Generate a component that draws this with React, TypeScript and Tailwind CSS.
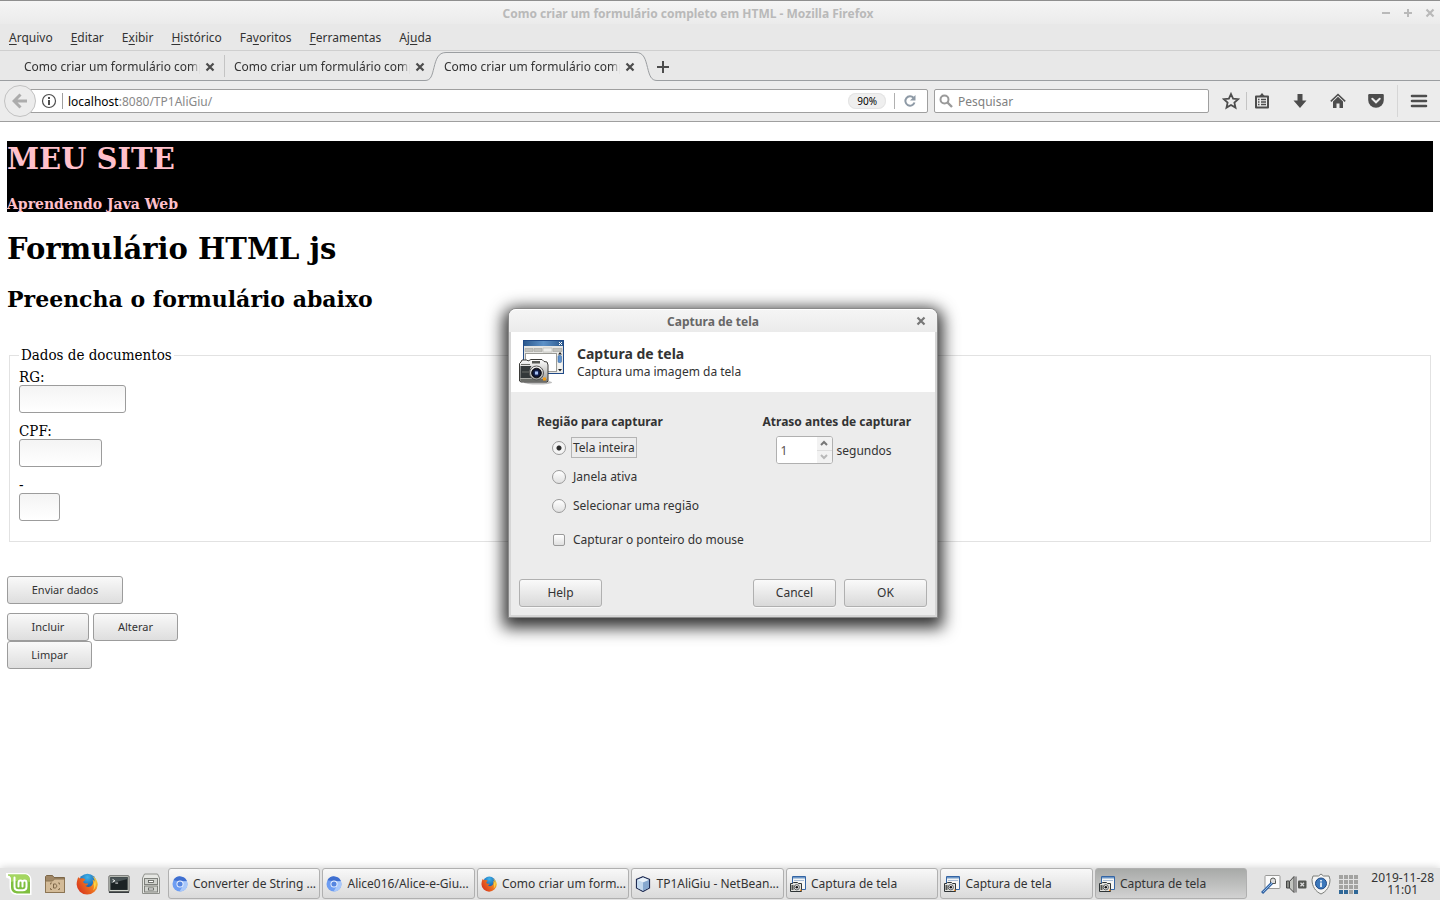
import type { ReactNode } from "react";

type IconProps = { className?: string };

function CaptureIcon({ className = "" }: IconProps) {
  return (
    <svg viewBox="0 0 48 48" className={className} aria-hidden="true">
      <defs>
        <linearGradient id="capTitle" x1="0" y1="0" x2="1" y2="0">
          <stop offset="0" stopColor="#2d5a8e" />
          <stop offset="0.5" stopColor="#5d92c8" />
          <stop offset="1" stopColor="#2d5a8e" />
        </linearGradient>
        <linearGradient id="capBody" x1="0" y1="0" x2="0" y2="1">
          <stop offset="0" stopColor="#ffffff" />
          <stop offset="1" stopColor="#9a9a96" />
        </linearGradient>
        <radialGradient id="capLens">
          <stop offset="0" stopColor="#7c9fe0" />
          <stop offset="0.35" stopColor="#1a2b66" />
          <stop offset="1" stopColor="#06070f" />
        </radialGradient>
      </defs>
      <ellipse cx="20" cy="44.500" rx="14" ry="2" fill="#000" opacity="0.25" />
      <rect x="5.500" y="2.500" width="40" height="33" fill="#e6e6e3" stroke="#204a87" />
      <rect x="6" y="3" width="39" height="5" fill="url(#capTitle)" />
      <path d="M41 4l3 3M44 4l-3 3" stroke="#fff" strokeWidth="1" />
      <path d="M7 10.500h8v3h-8zM16 10.500h8v3h-8zM35 10.500h9v3h-9z" fill="#c2c2bd" stroke="#a5a59f" strokeWidth="0.600" />
      <path d="M25 14V10h9v4z" fill="#eeeeec" stroke="#b5b5b0" strokeWidth="0.600" />
      <rect x="7.500" y="15.500" width="31" height="18" fill="#fff" stroke="#9b9b96" />
      <rect x="39.500" y="14.500" width="4.500" height="20" fill="#f3f3f0" />
      <rect x="40" y="17.500" width="3.500" height="7" rx="1" fill="#5d92d0" stroke="#2d5a8e" strokeWidth="0.500" />
      <path d="M40 16.500h4l-2-2.500zM40 31h4l-2 2.500z" fill="#222" />
      <path d="M3 24l1-2h5l1 1 3-1.500h11l2 2 3 .5 1 3v16l-1 1H3l-1.500-1V25.500z" fill="url(#capBody)" stroke="#3b3b38" />
      <path d="M2.500 28h11c-2.500 3-2.500 9 0 12h-11z" fill="#33383a" />
      <path d="M3 26.500h9M4 34h7" stroke="#6a6c68" strokeWidth="1" />
      <path d="M2.500 41h26v2.500h-26z" fill="#6c6e6a" />
      <rect x="14" y="23" width="8" height="2.500" fill="#555753" />
      <circle cx="18.500" cy="35" r="7" fill="url(#capBody)" stroke="#555" />
      <circle cx="18.500" cy="35" r="4.800" fill="url(#capLens)" stroke="#15151a" />
      <rect x="17" y="33.500" width="3" height="3" fill="#a9c2f2" />
      <rect x="25" y="39.500" width="3" height="3" fill="#f59b10" />
    </svg>
  );
}

function CaptureSmallIcon({ className = "" }: IconProps) {
  return (
    <svg viewBox="0 0 16 16" className={className} aria-hidden="true">
      <path d="M2.500 .5h13v13h-13z" fill="#f6f6f4" stroke="#3465a4" />
      <path d="M3 1h12v1.500H3z" fill="#6f98c8" />
      <path d="M4 4.500h10" stroke="#a9bdd6" />
      <path d="M.5 7.500h2l1-1h4l1 1h3v8H.5z" fill="#e2e2de" stroke="#2e3436" />
      <path d="M1.500 9h2v5h-2z" fill="#555753" />
      <circle cx="6.800" cy="11.300" r="2.600" fill="#fff" stroke="#2e3436" strokeWidth="0.800" />
      <circle cx="6.800" cy="11.300" r="1.300" fill="#111" />
      <path d="M10 13.500h1.500V15H10z" fill="#f0902c" />
    </svg>
  );
}

function ChromiumIcon({ className = "" }: IconProps) {
  return (
    <svg viewBox="0 0 16 16" className={className} aria-hidden="true">
      <circle cx="8" cy="8" r="7.500" fill="#6d9df2" />
      <path d="M1.400 4.300A7.500 7.500 0 0 1 15 5.200H8z" fill="#3f6fd0" />
      <path d="M15 5.200A7.500 7.500 0 0 1 7.500 15.500L11 9.800 10 5.200z" fill="#a9c8fa" />
      <circle cx="8" cy="8" r="3.500" fill="#f3f7ff" />
      <circle cx="8" cy="8" r="2.600" fill="#5585e0" />
    </svg>
  );
}

function FirefoxIcon({ className = "" }: IconProps) {
  return (
    <svg viewBox="0 0 24 24" className={className} aria-hidden="true">
      <defs>
        <radialGradient id="ffGlobe" cx="0.5" cy="0.2" r="0.8">
          <stop offset="0" stopColor="#3fb4ea" />
          <stop offset="0.6" stopColor="#1c6bb8" />
          <stop offset="1" stopColor="#123a7c" />
        </radialGradient>
        <linearGradient id="ffTail" x1="0" y1="0.8" x2="1" y2="0.2">
          <stop offset="0" stopColor="#d6301d" />
          <stop offset="0.6" stopColor="#ee7420" />
          <stop offset="1" stopColor="#fbd63c" />
        </linearGradient>
      </defs>
      <circle cx="12.500" cy="10.500" r="9.700" fill="url(#ffGlobe)" />
      <path
        d="M2.500 4.500c.8.300 1.400.9 1.800 1.700C6 5.500 8.500 5.800 10 6.800c-.6 1.200-1 2-2.300 2.500.2 1 .8 1.600 2 2.200 1.500.2 2.500-.3 3.600.2-.5 1.300-2 2.200-3.400 2.300 2.800 2.400 7 1 8.300-2 .8-2 .3-4-.5-5 1.500.6 2.300 1.600 2.600 2.600.1-2.500-1-4.600-2.500-6 3.400 1.500 6 5 6 9.200A11.600 11.600 0 0 1 12.200 23.500 11.400 11.400 0 0 1 .7 12.600C.7 9.500 1.500 6.700 2.500 4.500z"
        fill="url(#ffTail)"
      />
      <path d="M20.300 8c2.300 3.500 1.500 8.700-1.800 11.200 1.500-3 1.500-5.200.8-7.200.9-1.300 1.200-2.600 1-4z" fill="#fde04a" opacity="0.850" />
    </svg>
  );
}

function CubeIcon({ className = "" }: IconProps) {
  return (
    <svg viewBox="0 0 16 16" className={className} aria-hidden="true">
      <path d="M8 .7l6.500 2.800v8.500L8 15.500 1.500 12V3.500z" fill="#b9d1ea" stroke="#1f2b52" strokeWidth="1.200" />
      <path d="M8 1.500L14 4 8 6.500 2 4z" fill="#e9f2fa" />
      <path d="M8 6.500L14 4v7.700l-6 3z" fill="#86a8cf" />
      <path d="M8 6.500L2 4v7.700l6 3z" fill="#c3d9ee" />
    </svg>
  );
}

function MintIcon({ className = "" }: IconProps) {
  return (
    <svg viewBox="0 0 26 24" className={className} aria-hidden="true">
      <path d="M0 1h18.500C23 1 25.500 4 25.500 8v15H12C6 23 3.500 19.500 3.500 14.500V7L0 5.500z" fill="#fff" />
      <path d="M2 2.500h16c3.800 0 6 2 6 5.500v13.500H12.500c-4.500 0-7.500-2-7.500-6.500V6.500C5 4.700 4 3.800 2 3.500z" fill="#7fbf3f" />
      <path d="M2 2.500h16c3.800 0 6 2 6 5.500v2c-6-2-12-2-19 0V6.500C5 4.700 4 3.800 2 3.500z" fill="#b4e070" opacity="0.700" />
      <path d="M8.500 5.500v9c0 2.500 1.500 3.800 3.800 3.800h4.500c2.300 0 3.700-1.300 3.700-3.800v-3.700c0-3.200-4-3.200-4 0v3.700m0-3.700c0-3.200-4-3.200-4 0v3.700" fill="none" stroke="#fff" strokeWidth="2" strokeLinecap="round" />
    </svg>
  );
}

function FolderIcon({ className = "" }: IconProps) {
  return (
    <svg viewBox="0 0 22 20" className={className} aria-hidden="true">
      <path d="M1.500 18.500v-16l1-1h6l1.500 2h10.500v15z" fill="#a08766" stroke="#7c6648" />
      <path d="M1.500 18.500V7h7l2-2h10v13.500z" fill="#d3bb98" stroke="#8b7453" />
      <path d="M8 9H6.500v1.500M8 15.500H6.500V14M14 9h1.500v1.500M14 15.500h1.500V14" fill="none" stroke="#8b7453" />
      <path d="M9.500 10h1.500c2.300 0 2.300 4 0 4H9.500z" fill="none" stroke="#7c6648" />
    </svg>
  );
}

function TerminalIcon({ className = "" }: IconProps) {
  return (
    <svg viewBox="0 0 24 20" className={className} aria-hidden="true">
      <rect x="1" y="1" width="22" height="17.500" rx="1" fill="#d3d7cf" stroke="#555753" />
      <rect x="2.500" y="2.500" width="19" height="14" fill="#1b2224" />
      <path d="M2.500 9.500l19-5v-2h-19z" fill="#4a5456" />
      <path d="M5 5l2.500 1.500L5 8M8 9h3" fill="none" stroke="#fff" />
      <path d="M1 19h22" stroke="#2e3436" strokeWidth="1.500" />
    </svg>
  );
}

function CabinetIcon({ className = "" }: IconProps) {
  return (
    <svg viewBox="0 0 20 22" className={className} aria-hidden="true">
      <path d="M3.500 1h13l2 4v15.500h-17V5z" fill="#e6e7e3" stroke="#8e908b" />
      <rect x="3.500" y="5.500" width="13" height="6" fill="#d0d2cd" stroke="#7e807b" />
      <rect x="3.500" y="13" width="13" height="6" fill="#d0d2cd" stroke="#7e807b" />
      <rect x="7.500" y="7.500" width="5" height="2" fill="#fff" stroke="#555753" strokeWidth="0.800" />
      <rect x="7.500" y="15" width="5" height="2" fill="#fff" stroke="#555753" strokeWidth="0.800" />
    </svg>
  );
}

function CrossIcon({ className = "" }: IconProps) {
  return (
    <svg viewBox="0 0 10 10" className={className} aria-hidden="true">
      <path d="M1.500 1.500l7 7M8.500 1.500l-7 7" stroke="currentColor" strokeWidth="2.200" />
    </svg>
  );
}

const MENUS: [string, string, string][] = [
  ["", "A", "rquivo"],
  ["", "E", "ditar"],
  ["E", "x", "ibir"],
  ["", "H", "istórico"],
  ["Fa", "v", "oritos"],
  ["", "F", "erramentas"],
  ["Aj", "u", "da"],
];

function TitleBar() {
  return (
    <header className="flex h-6 items-center border-t border-[#8f8f8f] bg-linear-to-b from-[#f5f5f5] to-[#ebebeb]">
      <div className="flex-1 pt-0.5 text-center font-bold text-[#b9b9b9]">
        Como criar um formulário completo em HTML - Mozilla Firefox
      </div>
      <div className="flex w-16 items-center justify-end gap-3 pr-[5px] text-[#b9b9b9]">
        <button aria-label="Minimizar">
          <svg viewBox="0 0 10 10" className="size-2.5"><path d="M1 5h8" stroke="currentColor" strokeWidth="2" /></svg>
        </button>
        <button aria-label="Maximizar">
          <svg viewBox="0 0 10 10" className="size-2.5"><path d="M1 5h8M5 1v8" stroke="currentColor" strokeWidth="2" /></svg>
        </button>
        <button aria-label="Fechar">
          <CrossIcon className="size-2.5" />
        </button>
      </div>
    </header>
  );
}

function MenuBar() {
  return (
    <nav className="flex h-[27px] items-center border-b border-[#cfcfcf] bg-[#e8e8e8] pt-0.5">
      {MENUS.map(([before, key, after]) => (
        <button key={before + key + after} className="px-[9px]">
          {before}
          <span className="underline underline-offset-2">{key}</span>
          {after}
        </button>
      ))}
    </nav>
  );
}

function TabLabel() {
  return (
    <>
      <span className="w-44 overflow-hidden pt-0.5 whitespace-nowrap mask-r-from-95%">
        Como criar um formulário completo em HTML
      </span>
      <button aria-label="Fechar aba" className="ml-[5px] pt-0.5 text-[#4c4c4c]">
        <CrossIcon className="size-2.5" />
      </button>
    </>
  );
}

function TabStrip() {
  return (
    <div className="flex h-[30px] items-stretch bg-[#e8e8e8]">
      <div className="flex w-[225px] items-center border-b border-[#9b9ea1] pl-6">
        <TabLabel />
        <span className="ml-auto h-[22px] w-px bg-[#c4c4c4]" />
      </div>
      <div className="flex w-[200px] items-center border-b border-[#9b9ea1] pl-[9px]">
        <TabLabel />
      </div>
      <div className="relative flex w-[232px] items-center pl-[19px]">
        <svg viewBox="0 0 232 30" className="absolute inset-0 h-[30px] w-[232px]" aria-hidden="true">
          <path d="M0 30v-.5c6 0 7-5 9-13S13 1.500 21 1.500h190c8 0 9.500 7 11.500 15s3.500 13 9.500 13v.5z" fill="#ececec" />
          <path d="M0 29.500c6 0 7-5 9-13S13 1.500 21 1.500h190c8 0 9.500 7 11.500 15s3.500 13 9.500 13" fill="none" stroke="#9b9ea1" />
        </svg>
        <span className="relative flex items-center">
          <TabLabel />
        </span>
      </div>
      <div className="flex flex-1 items-center border-b border-[#9b9ea1] pt-0.5">
        <button aria-label="Nova aba" className="text-[#4c4c4c]">
          <svg viewBox="0 0 12 12" className="size-3"><path d="M6 0v12M0 6h12" stroke="currentColor" strokeWidth="2" /></svg>
        </button>
      </div>
    </div>
  );
}

function ToolButton({ label, children }: { label: string; children: ReactNode }) {
  return (
    <button aria-label={label} className="grid size-[18px] place-items-center text-[#4d4d4d]">
      {children}
    </button>
  );
}

function NavBar() {
  return (
    <div className="flex h-[41px] items-center border-b border-[#9f9f9f] bg-[#ececec] pr-3 pl-1">
      <button aria-label="Voltar" className="relative z-10 grid size-8 place-items-center rounded-full border border-[#c2c2c2] bg-[#ececec] text-[#acacac]">
        <svg viewBox="0 0 16 16" className="size-4"><path d="M8.500 1.500L2 8l6.500 6.500M2.500 8H15" fill="none" stroke="currentColor" strokeWidth="3" /></svg>
      </button>
      <div className="-ml-4 flex h-6 flex-1 items-center rounded-xs border border-[#9f9f9f] bg-white pl-5">
        <svg viewBox="0 0 16 16" className="size-4 shrink-0 text-[#4d4d4d]" aria-hidden="true">
          <circle cx="8" cy="8" r="6.500" fill="none" stroke="currentColor" strokeWidth="1.200" />
          <path d="M8 7v5M8 4v2" stroke="currentColor" strokeWidth="2" />
        </svg>
        <span className="ml-[5px] h-4 w-px bg-[#9f9f9f]" />
        <div className="ml-[5px] flex-1 pt-0.5 text-[#888888]">
          <span className="text-black">localhost</span>:8080/TP1AliGiu/
        </div>
        <button className="h-4 rounded-full bg-[#efefef] px-[9px] text-[10px] leading-4 text-black ring-1 ring-[#e4e4e4] ring-inset">90%</button>
        <span className="mx-2 h-4 w-px bg-[#b0b0b0]" />
        <button aria-label="Recarregar" className="mr-2.5 text-[#8e9aa6]">
          <svg viewBox="0 0 14 14" className="size-3.5">
            <path d="M10.500 3.700A4.700 4.700 0 1 0 11.500 8.500" fill="none" stroke="currentColor" strokeWidth="2" />
            <path d="M12.500 1v5.500H7z" fill="currentColor" />
          </svg>
        </button>
      </div>
      <label className="ml-1.5 flex h-6 w-[275px] items-center rounded-xs border border-[#9f9f9f] bg-white px-1">
        <svg viewBox="0 0 14 14" className="size-3.5 shrink-0" aria-hidden="true">
          <circle cx="5.500" cy="5.500" r="4" fill="none" stroke="#9a9a9a" strokeWidth="2" />
          <path d="M8.500 8.500l4.500 4.500" stroke="#9a9a9a" strokeWidth="2.400" />
        </svg>
        <input aria-label="Pesquisar" placeholder="Pesquisar" className="ml-[5px] min-w-0 flex-1 pt-0.5 outline-none placeholder:text-[#808080]" />
      </label>
      <div className="ml-[13px] flex items-center">
        <ToolButton label="Favoritar">
          <svg viewBox="0 0 18 18" className="size-[18px]"><path d="M9 2l2.100 4.700 5.100.5-3.800 3.400 1.100 5L9 13l-4.500 2.600 1.100-5L1.800 7.200l5.100-.5z" fill="none" stroke="currentColor" strokeWidth="1.800" /></svg>
        </ToolButton>
        <span className="ml-1.5 h-[18px] w-px bg-[#c4c4c4]" />
        <div className="ml-1.5 flex gap-5">
          <ToolButton label="Biblioteca">
            <svg viewBox="0 0 18 18" className="size-[18px]">
              <path d="M3 4.500h12v11H3z" fill="none" stroke="currentColor" strokeWidth="2" strokeLinejoin="round" />
              <path d="M6 4.500L9 1l3 3.500z" fill="currentColor" />
              <path d="M5 7.500h1.500M8 7.500h5M5 10h1.500M8 10h5M5 12.500h1.500M8 12.500h5" stroke="currentColor" strokeWidth="1.400" />
            </svg>
          </ToolButton>
          <ToolButton label="Downloads">
            <svg viewBox="0 0 18 18" className="size-[18px]"><path d="M6.500 2h5v6.500h4L9 16 2.500 8.500h4z" fill="currentColor" /></svg>
          </ToolButton>
          <ToolButton label="Início">
            <svg viewBox="0 0 18 18" className="size-[18px]">
              <path d="M1.800 9.300L9 2.500l7.200 6.800" fill="none" stroke="currentColor" strokeWidth="1.600" />
              <path d="M4 9.500l5-4.700 5 4.700V16h-3.500v-4.500h-3V16H4z" fill="currentColor" />
            </svg>
          </ToolButton>
          <ToolButton label="Pocket">
            <svg viewBox="0 0 18 18" className="size-[18px]">
              <path d="M2.500 2h13c.8 0 1.300.5 1.300 1.300V8a7.800 7.800 0 0 1-15.600 0V3.300C1.200 2.500 1.700 2 2.500 2z" fill="currentColor" />
              <path d="M5.300 6.800L9 10.300l3.700-3.500" fill="none" stroke="#ececec" strokeWidth="2" strokeLinecap="round" />
            </svg>
          </ToolButton>
        </div>
        <span className="ml-3 h-8 w-px bg-[#d6d6d6]" />
        <div className="ml-3">
          <ToolButton label="Menu">
            <svg viewBox="0 0 18 18" className="size-[18px]"><path d="M2 4h14M2 9h14M2 14h14" stroke="currentColor" strokeWidth="2.600" strokeLinecap="round" /></svg>
          </ToolButton>
        </div>
      </div>
    </div>
  );
}

function PageButton({ children, width }: { children: string; width: string }) {
  return (
    <button
      type="button"
      className={`h-7 rounded-[3px] border border-[#9c9c9c] bg-linear-to-b from-[#f9f9f9] to-[#dedede] text-center text-[11px] text-[#333333] ${width}`}
    >
      {children}
    </button>
  );
}

function Field({ id, label, width }: { id: string; label: string; width: string }) {
  return (
    <div className="mb-2.5 flex flex-col items-start">
      <label htmlFor={id} className="leading-4">{label}</label>
      <input
        id={id}
        className={`h-7 rounded-[3px] border border-[#9c9c9c] bg-linear-to-b from-[#f4f4f4] to-white px-1 font-[Noto_Sans,sans-serif] text-[11px] outline-none ${width}`}
      />
    </div>
  );
}

function Page() {
  return (
    <main className="flex-1 bg-white px-[7px] pt-[19px] font-[DejaVu_Serif,serif] text-sm text-black">
      <div className="bg-black text-[#ffc0cb]">
        <h1 className="text-[29px] leading-9 font-bold">MEU SITE</h1>
        <h4 className="pt-[19px] text-sm leading-4 font-bold">Aprendendo Java Web</h4>
      </div>
      <h1 className="mt-5 text-[29px] leading-[34px] font-bold">Formulário HTML js</h1>
      <h2 className="mt-5 text-[22px] leading-[26px] font-bold">Preencha o formulário abaixo</h2>
      <form>
        <fieldset className="mx-[2px] mt-[35px] border border-[#e2e2e2] px-[9px] pb-2.5 font-[DejaVu_Serif_Condensed,DejaVu_Serif,serif] text-[15px]">
          <legend className="px-0.5 leading-4">Dados de documentos</legend>
          <div className="pt-1.5">
            <Field id="rg" label="RG:" width="w-[107px]" />
            <Field id="cpf" label="CPF:" width="w-[83px]" />
            <Field id="digito" label="-" width="w-[41px]" />
          </div>
        </fieldset>
        <div className="mt-[34px] font-[Noto_Sans,sans-serif]">
          <PageButton width="w-[116px]">Enviar dados</PageButton>
          <div className="mt-[9px] flex gap-1">
            <PageButton width="w-[82px]">Incluir</PageButton>
            <PageButton width="w-[85px]">Alterar</PageButton>
          </div>
          <PageButton width="w-[85px]">Limpar</PageButton>
        </div>
      </form>
    </main>
  );
}

function DialogButton({ children }: { children: string }) {
  return (
    <button className="h-7 w-[83px] rounded-[3px] border border-[#b0b0b0] bg-linear-to-b from-[#fafafa] to-[#d9d9d9] shadow-[0_1px_0_#f8f8f8]">
      {children}
    </button>
  );
}

const RADIO =
  "size-3.5 shrink-0 appearance-none rounded-full border border-[#9a9a9a] bg-linear-to-b from-white to-[#e0e0e0] checked:bg-[radial-gradient(circle,#2b2b2b_0_2px,#f4f4f4_3px)]";

function CaptureDialog() {
  return (
    <section
      role="dialog"
      aria-labelledby="dialog-title"
      className="absolute top-[308px] left-[508px] z-20 w-[430px] rounded-t-lg border border-[#8a8a8a] bg-[#d6d6d6] shadow-[0_5px_16px_5px_rgba(0,0,0,0.8)]"
    >
      <div className="flex h-[23px] items-center rounded-t-[7px] border-t border-white bg-linear-to-b from-[#f5f5f5] to-[#ebebeb] pr-[11px]">
        <h2 id="dialog-title" className="flex-1 pt-0.5 pl-px text-center font-bold text-[#676767]">Captura de tela</h2>
        <button aria-label="Fechar" className="text-[#777777]"><CrossIcon className="size-2.5" /></button>
      </div>
      <div className="mx-0.5 mb-0.5 bg-[#ececec]">
        <div className="flex h-[60px] items-center bg-white px-[7px]">
          <CaptureIcon className="size-12" />
          <div className="ml-[11px]">
            <p className="text-sm leading-[18px] font-bold">Captura de tela</p>
            <p className="leading-[17px]">Captura uma imagem da tela</p>
          </div>
        </div>
        <div className="flex justify-between pt-5 pr-6 pl-[26px]">
          <fieldset>
            <legend className="leading-5 font-bold">Região para capturar</legend>
            <div className="mt-[5px] ml-[15px] flex flex-col gap-2">
              <label className="flex h-[21px] items-center">
                <input type="radio" name="area" defaultChecked className={RADIO} />
                <span className="ml-[5px] border border-[#b4b4b4] px-px leading-[19px]">Tela inteira</span>
              </label>
              <label className="flex h-[21px] items-center gap-[7px]">
                <input type="radio" name="area" className={RADIO} />
                Janela ativa
              </label>
              <label className="flex h-[21px] items-center gap-[7px]">
                <input type="radio" name="area" className={RADIO} />
                Selecionar uma região
              </label>
              <label className="mt-[5px] flex h-[21px] items-center">
                <input
                  type="checkbox"
                  className="mx-px size-3 shrink-0 appearance-none rounded-xs border border-[#9a9a9a] bg-linear-to-b from-white to-[#e0e0e0] checked:bg-[#777777]"
                />
                <span className="ml-[7px]">Capturar o ponteiro do mouse</span>
              </label>
            </div>
          </fieldset>
          <fieldset>
            <legend className="leading-5 font-bold">Atraso antes de capturar</legend>
            <div className="mt-1 ml-[13px] flex items-center gap-1">
              <div className="flex h-7 w-[57px] overflow-hidden rounded-[3px] border border-[#b0b0b0] bg-white">
                <input id="delay" defaultValue="1" className="w-10 bg-white px-1 pt-0.5 text-[#5a5050] outline-none" />
                <div className="flex flex-1 flex-col divide-y divide-[#dddddd] bg-[#f2f2f2]">
                  <button aria-label="Aumentar" className="grid flex-1 place-items-center text-[#777777]">
                    <svg viewBox="0 0 8 6" className="h-1.5 w-2"><path d="M1 5l3-3 3 3" fill="none" stroke="currentColor" strokeWidth="2" /></svg>
                  </button>
                  <button aria-label="Diminuir" className="grid flex-1 place-items-center text-[#b8b8b8]">
                    <svg viewBox="0 0 8 6" className="h-1.5 w-2"><path d="M1 1l3 3 3-3" fill="none" stroke="currentColor" strokeWidth="2" /></svg>
                  </button>
                </div>
              </div>
              <label htmlFor="delay" className="pt-0.5">segundos</label>
            </div>
          </fieldset>
        </div>
        <div className="flex gap-2 px-2 pt-[29px] pb-2">
          <DialogButton>Help</DialogButton>
          <span className="flex-1" />
          <DialogButton>Cancel</DialogButton>
          <DialogButton>OK</DialogButton>
        </div>
      </div>
    </section>
  );
}

const TASKS: { label: string; icon: (p: IconProps) => ReactNode; active?: boolean }[] = [
  { label: "Converter de String ...", icon: ChromiumIcon },
  { label: "Alice016/Alice-e-Giu...", icon: ChromiumIcon },
  { label: "Como criar um form...", icon: FirefoxIcon },
  { label: "TP1AliGiu - NetBean...", icon: CubeIcon },
  { label: "Captura de tela", icon: CaptureSmallIcon },
  { label: "Captura de tela", icon: CaptureSmallIcon },
  { label: "Captura de tela", icon: CaptureSmallIcon, active: true },
];

function Tray() {
  return (
    <div className="flex items-center">
      <svg viewBox="0 0 20 20" className="size-5" aria-hidden="true">
        <rect x="4" y="1.500" width="15" height="13" rx="1" fill="#fbfbfb" stroke="#9a9a98" />
        <path d="M9.500 9.500V6.500a2.500 2.500 0 0 1 5 0v3h-5z" fill="#ddd" stroke="#555753" />
        <path d="M1 19L11 9" stroke="#3465a4" strokeWidth="3" />
        <path d="M2 18l9-9" stroke="#8fb6e2" strokeWidth="1" />
      </svg>
      <svg viewBox="0 0 22 20" className="ml-1 h-5 w-[22px]" aria-hidden="true">
        <path d="M1.500 7h3v7h-3z" fill="#888a85" stroke="#444" />
        <path d="M4.500 7.500L9 2.500v16L4.500 14z" fill="#c2c4bf" stroke="#444" />
        <path d="M11 2.500v16" stroke="#666" strokeWidth="1.200" />
        <rect x="13" y="6.500" width="8.500" height="8" rx="1" fill="#555753" />
        <path d="M15.500 8.800l3.500 3.500M19 8.800l-3.500 3.500" stroke="#dcdcdc" strokeWidth="1.300" />
      </svg>
      <svg viewBox="0 0 20 22" className="ml-1 h-[22px] w-5" aria-hidden="true">
        <path d="M10 1l2.500 2H18l1 3.500c0 7-3.500 12-9 14.500C4.500 18.500 1 13.500 1 6.500L2 3h5.500z" fill="#f4f4f3" stroke="#7c7e7a" />
        <circle cx="10" cy="10.500" r="5.500" fill="#3c78bb" stroke="#204a87" />
        <path d="M10 9.500V14M10 7v1.500" stroke="#fff" strokeWidth="1.600" />
      </svg>
      <svg viewBox="0 0 19 19" className="ml-2 size-[19px]" aria-hidden="true">
        {[0, 5, 10, 15].map((y) =>
          [0, 5, 10, 15].map((x) => (
            <rect
              key={`${x}-${y}`}
              x={x}
              y={y}
              width="4"
              height="4"
              fill={y < 15 ? "#a3a3a1" : x === 10 ? "#a3a3a1" : "#2f6797"}
            />
          )),
        )}
      </svg>
    </div>
  );
}

function TaskBar() {
  return (
    <footer className="flex h-8 items-stretch bg-[#e3e3e3] pr-1.5 pl-1.5 shadow-[0_0_8px_rgba(0,0,0,0.2)]">
      <div className="flex w-[162px] items-center">
        <button aria-label="Menu"><MintIcon className="h-6 w-[26px]" /></button>
        <button aria-label="Arquivos" className="ml-3"><FolderIcon className="h-5 w-[22px]" /></button>
        <button aria-label="Firefox" className="ml-2.5"><FirefoxIcon className="size-[22px]" /></button>
        <button aria-label="Terminal" className="ml-2.5"><TerminalIcon className="h-5 w-[22px]" /></button>
        <button aria-label="Gaveta" className="ml-[11px]"><CabinetIcon className="h-[22px] w-5" /></button>
      </div>
      <div className="flex min-w-0 flex-1 gap-0.5 pb-px">
        {TASKS.map(({ label, icon: Icon, active }, i) => (
          <button
            key={i}
            className={`flex min-w-0 flex-1 items-center gap-[5px] rounded-[3px] border border-[#b0b0b0] bg-linear-to-b pl-[3px] text-left ${
              active ? "from-[#a8aaa8] to-[#d2d2d2]" : "from-[#f8f8f8] to-[#dadada]"
            }`}
          >
            <Icon className="size-4 shrink-0" />
            <span className="whitespace-nowrap">{label}</span>
          </button>
        ))}
      </div>
      <div className="ml-3.5 flex">
        <Tray />
        <time className="ml-[13px] flex flex-col justify-center text-center text-xs leading-3">
          <span>2019-11-28</span>
          <span>11:01</span>
        </time>
      </div>
    </footer>
  );
}

export default function App() {
  return (
    <div className="relative flex min-h-screen flex-col font-[Noto_Sans,sans-serif] text-xs text-[#333333]">
      <TitleBar />
      <MenuBar />
      <TabStrip />
      <NavBar />
      <Page />
      <CaptureDialog />
      <TaskBar />
    </div>
  );
}
